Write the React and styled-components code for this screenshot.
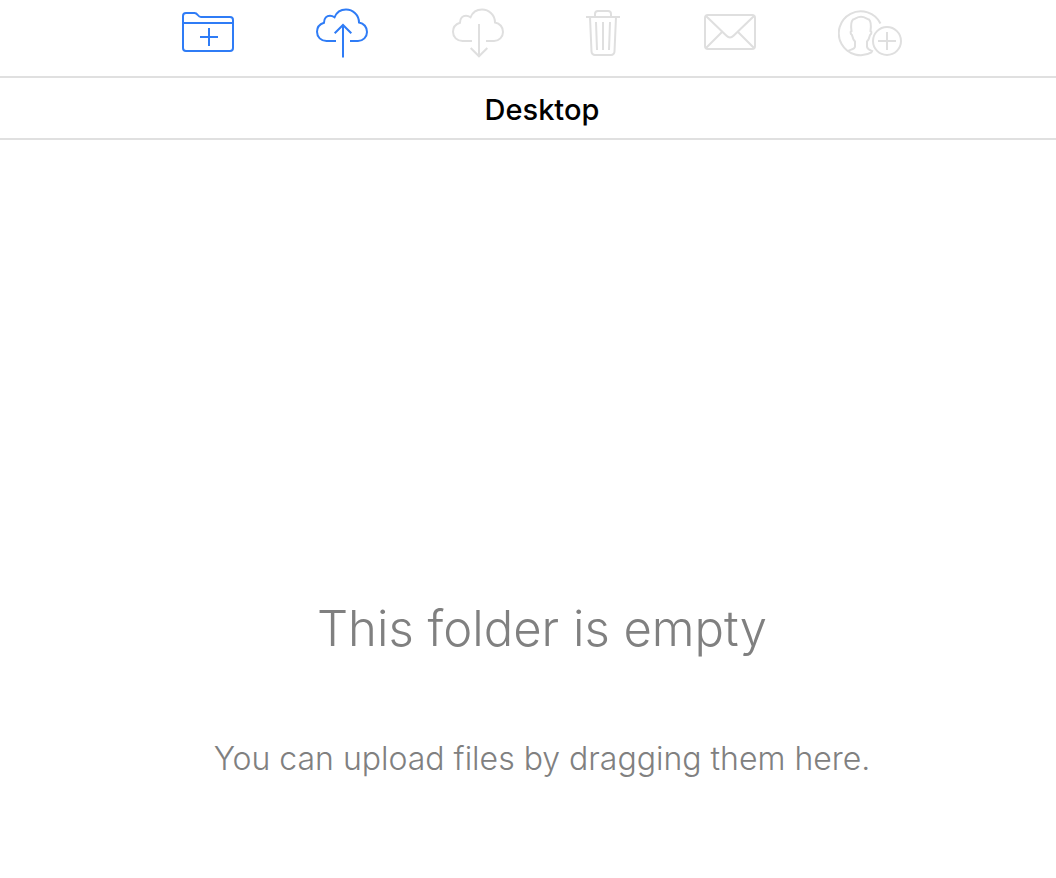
import React from 'react';
import styled, { createGlobalStyle } from 'styled-components';

const CLOUD =
    'M20 41H10.5C5 41 1 37 1 31.8C1 27.5 4 24 8 22.7C8 18 10.8 15.7 14 15.7C15.7 15.7 17 16.2 18.5 17.3C20.5 12.5 25 9.5 30 9.5C37 9.5 43 15 43 22.5C48 23.2 51 27.3 51 32C51 37 47 41 42 41H34';

const actions = [
    {
        label: 'New folder',
        width: 52,
        active: true,
        icon: (
            <>
                <path d="M1 48V16a3 3 0 0 1 3-3h8.5c3.5 0 3 4 6.5 4h29a3 3 0 0 1 3 3v28a3 3 0 0 1-3 3H4a3 3 0 0 1-3-3z" />
                <path d="M1 23h50M27 28v18M18 37h18" />
            </>
        ),
    },
    {
        label: 'Upload',
        width: 54,
        active: true,
        icon: (
            <>
                <path d={CLOUD} />
                <path d="M27 57.5V25M18.7 33.3L27 25l8.3 8.3" />
            </>
        ),
    },
    {
        label: 'Download',
        width: 52,
        icon: (
            <>
                <path d={CLOUD} />
                <path d="M27 24v32.2M18.7 48l8.3 8.3l8.3-8.3" />
            </>
        ),
    },
    {
        label: 'Delete',
        width: 36,
        icon: (
            <>
                <path d="M0 17h34M9 17v-3a3 3 0 0 1 3-3h10a3 3 0 0 1 3 3v3" />
                <path d="M4 17l1.5 34.5a3.5 3.5 0 0 0 3.5 3.5h16a3.5 3.5 0 0 0 3.5-3.5L30 17" />
                <path d="M10 22l1 28M17 22v28M24 22l-1 28" />
            </>
        ),
    },
    {
        label: 'Email',
        width: 52,
        icon: (
            <>
                <rect x="1" y="15" width="50" height="34" rx="3" />
                <path d="M2 16l20.5 19.8q3.5 3.5 7 0L50 16M2 48l16-16M50 48L34 32" />
            </>
        ),
    },
    {
        label: 'Add people',
        width: 64,
        icon: (
            <>
                <path d="M42.5 23.5A22 22 0 1 0 34 52.2" />
                <path d="M9.5 51C12 49.5 17 49.5 17 46.5V41.5C15 39.5 14.5 37 14 35C12.5 34 12 31.5 13.5 31C12.5 24 13 21.5 15 19.5C18 18.5 19 16.8 23 16.8C27 16.8 28 18.5 31 19.5C33 21.5 33.5 24 32.5 31C34 31.5 33.5 34 32 35C31.5 37 31 39.5 29 41.5V46.5C29 49.5 32 50 35 51.5" />
                <circle cx="49" cy="41" r="14" />
                <path d="M40 41h18M49 32v18" />
            </>
        ),
    },
];

const App = () => (
    <Page>
        <GlobalStyle />
        <Toolbar>
            {actions.map(({ label, width, active, icon }) => (
                <ToolButton key={label} type="button" aria-label={label} disabled={!active}>
                    <Icon width={width} height="60" viewBox={`0 0 ${width} 60`} aria-hidden="true">
                        {icon}
                    </Icon>
                </ToolButton>
            ))}
        </Toolbar>
        <FolderName>Desktop</FolderName>
        <EmptyFolder>
            <Title>This folder is empty</Title>
            <Hint>You can upload files by dragging them here.</Hint>
        </EmptyFolder>
    </Page>
);

const GlobalStyle = createGlobalStyle`
  * {
    box-sizing: border-box;
  }

  body {
    margin: 0;
    background: #fff;
    font-family: Inter, "Liberation Sans", sans-serif;
  }
`;

const Page = styled.div`
  display: flex;
  flex-direction: column;
  min-height: 100vh;
`;

const Toolbar = styled.header`
  display: flex;
  justify-content: center;
  gap: 82px;
  padding: 0 0 16px 28px;
  border-bottom: 2px solid #e0e0e0;
`;

const ToolButton = styled.button`
  display: block;
  padding: 0;
  border: 0;
  background: none;
  color: #2f7cf6;
  cursor: pointer;

  &:disabled {
    color: #dfdfdf;
    cursor: default;
  }
`;

const Icon = styled.svg`
  display: block;
  fill: none;
  stroke: currentColor;
  stroke-width: 2;
`;

const FolderName = styled.h1`
  margin: 0;
  padding: 14px 0 10px 28px;
  border-bottom: 2px solid #e0e0e0;
  color: #000;
  font-size: 29px;
  font-weight: 500;
  line-height: 36px;
  text-align: center;
`;

const EmptyFolder = styled.main`
  display: flex;
  flex: 1;
  flex-direction: column;
  align-items: center;
  justify-content: flex-end;
  gap: 78px;
  padding: 0 0 99px 28px;
  color: #808080;
  font-weight: 300;
  text-align: center;
`;

const Title = styled.h2`
  margin: 0;
  font-size: 49px;
  font-weight: 300;
  line-height: 64px;
`;

const Hint = styled.p`
  margin: 0;
  font-size: 32px;
  line-height: 40px;
`;

export default App;
